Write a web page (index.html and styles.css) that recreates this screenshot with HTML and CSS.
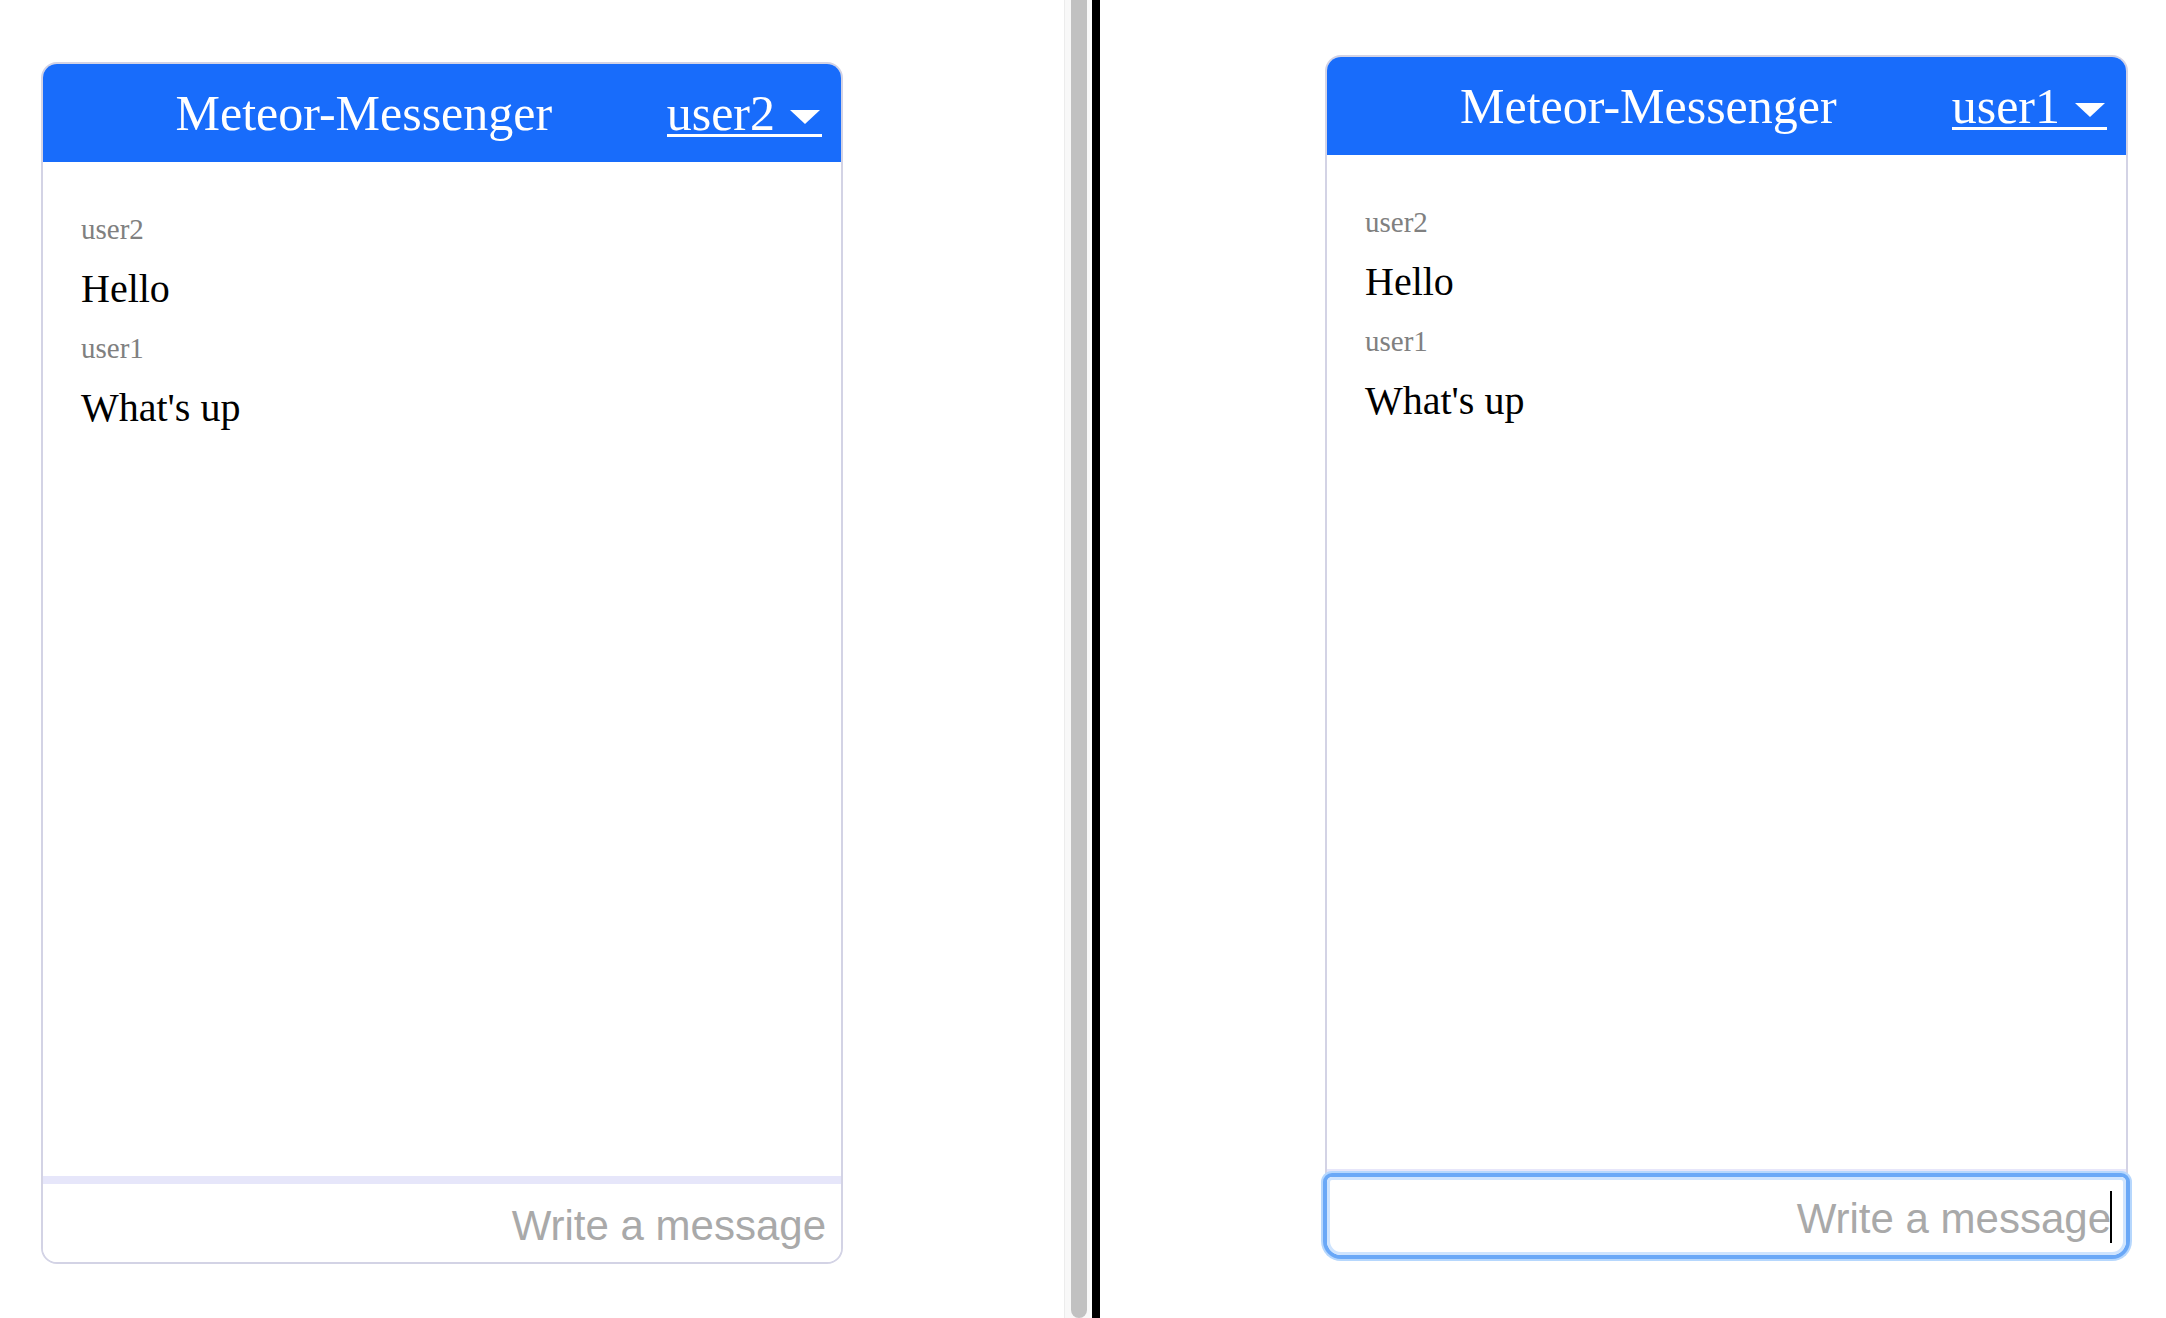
FILE: index.html
```html
<!DOCTYPE html>
<html lang="en">
<head>
<meta charset="utf-8">
<title>Meteor-Messenger</title>
<link rel="stylesheet" href="styles.css">
</head>
<body>
<div class="screen">
  <div class="window window-left">
    <div class="chat">
      <header class="chat-header">
        <h1 class="chat-title">Meteor-Messenger</h1>
        <a class="user-menu" href="#"><span class="user-name">user2</span><span class="caret"></span></a>
      </header>
      <div class="messages">
        <div class="message">
          <div class="message-author">user2</div>
          <div class="message-text">Hello</div>
        </div>
        <div class="message">
          <div class="message-author">user1</div>
          <div class="message-text">What's up</div>
        </div>
      </div>
      <div class="composer">
        <input class="composer-input" type="text" placeholder="Write a message">
      </div>
    </div>
  </div>
  <div class="scrollbar"><div class="scrollbar-thumb"></div></div>
  <div class="divider"></div>
  <div class="window window-right">
    <div class="chat">
      <header class="chat-header">
        <h1 class="chat-title">Meteor-Messenger</h1>
        <a class="user-menu" href="#"><span class="user-name">user1</span><span class="caret"></span></a>
      </header>
      <div class="messages">
        <div class="message">
          <div class="message-author">user2</div>
          <div class="message-text">Hello</div>
        </div>
        <div class="message">
          <div class="message-author">user1</div>
          <div class="message-text">What's up</div>
        </div>
      </div>
      <div class="composer composer-focused">
        <input class="composer-input" type="text" placeholder="Write a message">
        <span class="text-caret"></span>
      </div>
    </div>
  </div>
</div>
</body>
</html>
```

FILE: styles.css
```css
* { box-sizing: border-box; }

html, body {
  margin: 0;
  padding: 0;
  background: #ffffff;
}

body {
  font-family: "Liberation Serif", "Times New Roman", serif;
  overflow: hidden;
}

.screen {
  display: flex;
  width: 2166px;
  height: 1318px;
  overflow: hidden;
}

.window {
  height: 100%;
  background: #ffffff;
}

.window-left {
  width: 1064px;
  padding: 62px 0 0 41px;
}

.window-right {
  flex: 1;
  padding: 55px 0 0 225px;
}

.scrollbar {
  width: 28px;
  height: 100%;
  border-left: 1px solid #ececec;
  border-right: 2px solid #ffffff;
  background: #f8f8f8;
  padding-left: 6px;
}

.scrollbar-thumb {
  width: 16px;
  height: 100%;
  background: #c1c1c1;
  border-radius: 0 0 8px 8px;
}

.divider {
  width: 8px;
  height: 100%;
  background: #000000;
}

.chat {
  width: 802px;
  height: 1202px;
  border: 2px solid #d3d3e5;
  border-radius: 16px;
  display: flex;
  flex-direction: column;
  background: #ffffff;
}

.window-right .chat {
  width: 803px;
}

.chat-header {
  height: 98px;
  flex: none;
  background: #186cfb;
  border-radius: 14px 14px 0 0;
  display: flex;
  align-items: center;
  padding: 0 19px 0 18px;
  color: #ffffff;
}

.chat-title {
  flex: 1;
  margin: 0;
  text-align: center;
  font-weight: normal;
  font-size: 50px;
  line-height: 55px;
  font-family: "Liberation Serif", "Times New Roman", serif;
}

.user-menu {
  display: flex;
  align-items: flex-start;
  color: #ffffff;
  text-decoration: none;
  font-size: 50px;
  line-height: 55px;
  background-image: linear-gradient(#ffffff, #ffffff);
  background-repeat: no-repeat;
  background-size: 100% 3px;
  background-position: 0 48px;
}

.caret {
  width: 0;
  height: 0;
  margin: 24px 2px 0 15px;
  border-left: 15px solid transparent;
  border-right: 15px solid transparent;
  border-top: 14px solid #ffffff;
}

.messages {
  flex: 1;
  padding: 51px 38px 0 38px;
  border-bottom: 8px solid #e6e6fa;
}

.message {
  margin-bottom: 21px;
}

.message-author {
  font-size: 29px;
  line-height: 32px;
  color: #808080;
  margin-bottom: 22px;
}

.message-text {
  font-size: 40px;
  line-height: 44px;
  color: #000000;
}

.composer {
  position: relative;
  height: 78px;
  flex: none;
  border-radius: 0 0 14px 14px;
  background: #ffffff;
}

.composer-input {
  display: block;
  width: 100%;
  height: 100%;
  border: none;
  outline: none;
  background: transparent;
  border-radius: 0 0 14px 14px;
  padding: 6px 15px 0 15px;
  text-align: right;
  font-family: "Liberation Sans", Arial, sans-serif;
  font-size: 42px;
  color: #000000;
}

.composer-input::placeholder {
  color: #a9a9a9;
  opacity: 1;
}

.composer-focused {
  border-radius: 5px 5px 14px 14px;
  box-shadow: 0 0 0 4px #6aa8f7, 0 0 0 6px #b6d7fd, inset 0 0 0 3px #cfe4fe;
}

.text-caret {
  position: absolute;
  right: 14px;
  top: 14px;
  width: 2px;
  height: 52px;
  background: #000000;
}
```
